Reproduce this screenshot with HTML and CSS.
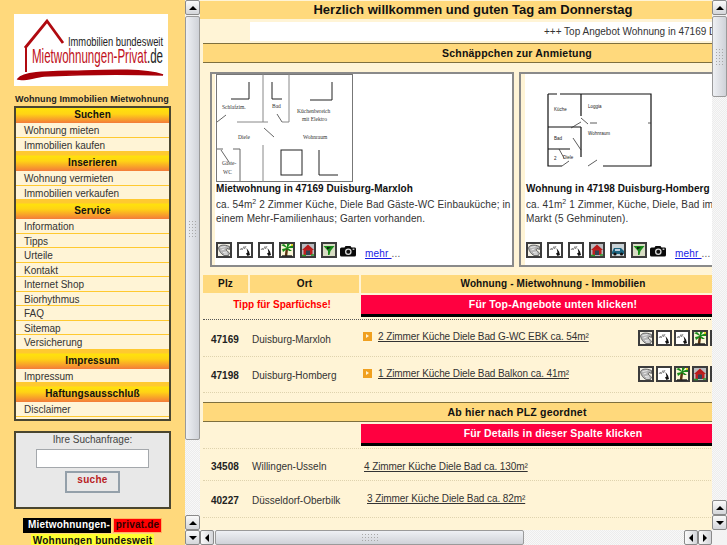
FILE: index.html
```html
<!DOCTYPE html>
<html lang="de">
<head>
<meta charset="utf-8">
<title>Mietwohnungen-Privat.de</title>
<link rel="stylesheet" href="styles.css">
</head>
<body>
<svg class="defs" width="0" height="0" aria-hidden="true">
  <symbol id="i-phone" viewBox="0 0 16 16">
    <rect x="1" y="1" width="14" height="14" fill="#f4f2e8" stroke="#3c3c3c" stroke-width="2"/>
    <path d="M2.5 6 C3 3 8 2 13.5 4.5 L13.5 7.5 L11 6.5 L10 8 L13.5 11 L12.5 13.5 L8 13.5 C5 12 3 9 2.5 6Z" fill="#b4b4b4" stroke="#444" stroke-width=".7"/>
    <path d="M4.5 5.5 L9.5 4.5 M5.5 8 L8.5 7 M7 10.5 L11 10 M8 12 L11.5 12" stroke="#f2f2f2" stroke-width=".9"/>
  </symbol>
  <symbol id="i-sketch" viewBox="0 0 16 16">
    <rect x="1" y="1" width="14" height="14" fill="#fff" stroke="#3c3c3c" stroke-width="2"/>
    <path d="M3 8 L4.5 6 L5 8 L7 4.5 L7.5 7 L9 4" fill="none" stroke="#8a8a8a" stroke-width="1"/>
    <path d="M9.5 6 L12 9.5 L13 13 L10.5 14 L9 11.5 L10.5 10.5Z" fill="#111"/>
  </symbol>
  <symbol id="i-palm" viewBox="0 0 16 16">
    <rect x="1" y="1" width="14" height="14" fill="#fbf6d8" stroke="#3c3c3c" stroke-width="2"/>
    <path d="M8 6 L7 14" stroke="#5a3410" stroke-width="2.4"/>
    <path d="M8 6 L2 3 L5 2 L8 5 L8 1.5 L11 2 L9 5 L14 3 L14 6 L9 6 L13 9 L10 9 L8 7 L4 10 L3 7Z" fill="#178a18"/>
    <circle cx="13" cy="3" r="1" fill="#e8d000"/>
    <path d="M3 14 H13" stroke="#222" stroke-width="1.4"/>
  </symbol>
  <symbol id="i-house" viewBox="0 0 16 16">
    <rect x="1" y="1" width="14" height="14" fill="#b9bcc0" stroke="#3c3c3c" stroke-width="2"/>
    <path d="M2 8 L8 2.5 L14 8Z" fill="#b81c1c"/>
    <rect x="3.5" y="7" width="9" height="6" fill="#c02020"/>
    <rect x="6" y="8.5" width="4" height="4.5" fill="#345"/>
    <path d="M2 13.5 H6 M11 13 H14" stroke="#2a9a2a" stroke-width="1.6"/>
  </symbol>
  <symbol id="i-car" viewBox="0 0 16 16">
    <rect x="1" y="1" width="14" height="14" fill="#c9d2d6" stroke="#3c3c3c" stroke-width="2"/>
    <path d="M2 10 L4 6 L11 6 L14 9 L14 12 L2 12Z" fill="#1c6480"/>
    <rect x="5" y="7" width="5" height="2" fill="#bcd"/>
    <circle cx="5" cy="12" r="1.6" fill="#111"/>
    <circle cx="11.5" cy="12" r="1.6" fill="#111"/>
  </symbol>
  <symbol id="i-tree" viewBox="0 0 16 16">
    <rect x="1" y="1" width="14" height="14" fill="#d8dcc4" stroke="#3c3c3c" stroke-width="2"/>
    <path d="M2.5 4 H13.5 L9.5 9 L8.5 13 L7 13 L7 9Z" fill="#178a18"/>
    <path d="M6 5 L10 5.5 L6 7.5Z" fill="#111"/>
  </symbol>
  <symbol id="i-cam" viewBox="0 0 16 12">
    <path d="M1.5 2.5 H4.5 L5.5 1 H10.5 L11.5 2.5 H15 Q16 2.5 16 4 V10 Q16 11.5 14.5 11.5 H1.5 Q0 11.5 0 10 V4 Q0 2.5 1.5 2.5Z" fill="#0a0a0a"/>
    <circle cx="8.3" cy="6.7" r="3.3" fill="#ddd"/>
    <circle cx="8.3" cy="6.7" r="2" fill="#111"/>
    <rect x="12.6" y="3.6" width="1.8" height="1.2" fill="#eee"/>
  </symbol>
</svg>

<aside class="left-frame">
  <div class="left-pane">
    <div class="logo">
      <svg width="154" height="72" viewBox="0 0 154 72">
        <rect width="154" height="72" fill="#fff"/>
        <path d="M11 34 L33 7 L49 29" fill="none" stroke="#b00a10" stroke-width="2.8"/>
        <path d="M12 33 V58" fill="none" stroke="#b00a10" stroke-width="2"/>
        <path d="M4 65 C10 57 40 58 70 57 C100 56 130 55 149 61 C120 60 70 60 30 62 C20 63 10 67 4 65Z" fill="#a80008" stroke="#a80008" stroke-width="1.6"/>
        <text class="logo-a" x="54" y="31.5" textLength="95" lengthAdjust="spacingAndGlyphs">Immobilien bundesweit</text>
        <text class="logo-b" x="18" y="49" textLength="131" lengthAdjust="spacingAndGlyphs">Mietwohnungen-Privat<tspan class="logo-c">.de</tspan></text>
      </svg>
    </div>
    <p class="tagline">Wohnung Immobilien Mietwohnung</p>
    <nav class="menu">
      <h2 class="menu-head first">Suchen</h2>
      <a class="menu-item" href="#">Wohnung mieten</a>
      <a class="menu-item" href="#">Immobilien kaufen</a>
      <h2 class="menu-head">Inserieren</h2>
      <a class="menu-item" href="#">Wohnung vermieten</a>
      <a class="menu-item" href="#">Immobilien verkaufen</a>
      <h2 class="menu-head">Service</h2>
      <a class="menu-item" href="#">Information</a>
      <a class="menu-item" href="#">Tipps</a>
      <a class="menu-item" href="#">Urteile</a>
      <a class="menu-item" href="#">Kontakt</a>
      <a class="menu-item" href="#">Internet Shop</a>
      <a class="menu-item" href="#">Biorhythmus</a>
      <a class="menu-item" href="#">FAQ</a>
      <a class="menu-item" href="#">Sitemap</a>
      <a class="menu-item" href="#">Versicherung</a>
      <h2 class="menu-head">Impressum</h2>
      <a class="menu-item" href="#">Impressum</a>
      <h2 class="menu-head">Haftungsausschluß</h2>
      <a class="menu-item" href="#">Disclaimer</a>
    </nav>
    <form class="search">
      <label class="search-label" for="q">Ihre Suchanfrage:</label>
      <input class="search-input" id="q" type="text">
      <button class="search-btn" type="button">suche</button>
    </form>
    <div class="brand">
      <span class="brand-a">Mietwohnungen-</span><span class="brand-b">privat.de</span>
    </div>
    <div class="brand-line"><span class="brand-c">Wohnungen bundesweit</span></div>
  </div>
  <div class="vbar">
    <span class="sb-btn up"></span>
    <span class="sb-thumb left-thumb"><span class="grip"></span></span>
    <span class="sb-track"></span>
    <span class="sb-btn up"></span>
    <span class="sb-btn down"></span>
  </div>
</aside>

<main class="right-frame">
  <div class="right-top">
    <div class="content">
      <h1 class="welcome">Herzlich willkommen und guten Tag am Donnerstag</h1>
      <div class="ticker"><span class="ticker-side"></span><span class="ticker-text">+++ Top Angebot Wohnung in 47169 Duisburg-Marxloh</span></div>
      <h2 class="band">Schnäppchen zur Anmietung</h2>
      <div class="cards">
        <article class="card">
          <svg class="plan" width="137" height="108" viewBox="0 0 137 108">
            <rect x=".5" y=".5" width="136" height="107" fill="#fff" stroke="#777"/>
            <g fill="none" stroke="#888" stroke-width="1">
              <path d="M47 0 V48 M47 71 V108 M21 48 H52 M73 0 V48 H66"/>
            </g>
            <g fill="none" stroke="#222" stroke-width="1">
              <path d="M33 8 V25 H15 M56 8 V25 H66 M116 8 V26 H94 M103 76 V101 H122"/>
              <rect x="65" y="76" width="21" height="25"/>
            </g>
            <g fill="none" stroke="#666" stroke-width="1">
              <path d="M61 40 L66 48 M48 54 L58 63 M1 48 L10 41 M5 76 L13 88 M1 75 H7"/>
              <path d="M17 75 H24 V107"/>
            </g>
            <g class="plan-text">
              <text x="6" y="35">Schlafzim.</text>
              <text x="56" y="34">Bad</text>
              <text x="81" y="39">Küchenbereich</text>
              <text x="86" y="47">mit Elektro</text>
              <text x="22" y="65">Diele</text>
              <text x="87" y="65">Wohnraum</text>
              <text x="6" y="91">Gäste-</text>
              <text x="7" y="100">WC</text>
            </g>
          </svg>
          <h3 class="card-title">Mietwohnung in 47169 Duisburg-Marxloh</h3>
          <p class="card-text">ca. 54m<sup>2</sup> 2 Zimmer Küche, Diele Bad Gäste-WC Einbauküche; in<br>einem Mehr-Familienhaus; Garten vorhanden.</p>
          <div class="card-icons">
            <svg class="ic"><use href="#i-phone"/></svg>
            <svg class="ic"><use href="#i-sketch"/></svg>
            <svg class="ic"><use href="#i-sketch"/></svg>
            <svg class="ic"><use href="#i-palm"/></svg>
            <svg class="ic"><use href="#i-house"/></svg>
            <svg class="ic"><use href="#i-tree"/></svg>
            <svg class="cam"><use href="#i-cam"/></svg>
            <span class="more"><a href="#">mehr </a> ...</span>
          </div>
        </article>
        <article class="card">
          <svg class="plan plain" width="137" height="108" viewBox="0 0 137 108">
            <g fill="none" stroke="#111" stroke-width="1.2">
              <path d="M22 20 H31 M34 20 H125 V92 H77 M22 20 V92 H36 M55 20 V42 M22 53 H55 M55 53 V83 M22 75 H44"/>
            </g>
            <g fill="none" stroke="#333" stroke-width=".8">
              <path d="M55 44 L62 50 M55 48 L45 54 M64 49 H71 M47 64 L55 76 M33 75 L38 84 M36 92 L43 87 M62 92 L71 86 M122 49 H125"/>
            </g>
            <g class="plan-text small">
              <text x="28" y="37">Küche</text>
              <text x="62" y="34">Loggia</text>
              <text x="28" y="66">Bad</text>
              <text x="62" y="61">Wohnraum</text>
              <text x="37" y="85">Diele</text>
              <text x="28" y="86">2</text>
            </g>
          </svg>
          <h3 class="card-title">Wohnung in 47198 Duisburg-Homberg</h3>
          <p class="card-text">ca. 41m<sup>2</sup> 1 Zimmer, Küche, Diele, Bad im 1. OG; Nähe<br>Markt (5 Gehminuten).</p>
          <div class="card-icons">
            <svg class="ic"><use href="#i-phone"/></svg>
            <svg class="ic"><use href="#i-sketch"/></svg>
            <svg class="ic"><use href="#i-sketch"/></svg>
            <svg class="ic"><use href="#i-house"/></svg>
            <svg class="ic"><use href="#i-car"/></svg>
            <svg class="ic"><use href="#i-tree"/></svg>
            <svg class="cam"><use href="#i-cam"/></svg>
            <span class="more"><a href="#">mehr </a> ...</span>
          </div>
        </article>
      </div>

      <div class="table">
        <div class="th">Plz</div>
        <div class="th">Ort</div>
        <div class="th wide">Wohnung - Mietwohnung - Immobilien</div>

        <div class="tipp">Tipp für Sparfüchse!</div>
        <div class="cta wide">Für Top-Angebote unten klicken!</div>
        <div class="rule strong"></div>

        <div class="plz">47169</div>
        <div class="ort">Duisburg-Marxloh</div>
        <div class="obj top"><span class="bullet"></span><a href="#">2 Zimmer Küche Diele Bad G-WC EBK ca. 54m²</a></div>
        <div class="row-icons">
          <svg class="ic"><use href="#i-phone"/></svg>
          <svg class="ic"><use href="#i-sketch"/></svg>
          <svg class="ic"><use href="#i-sketch"/></svg>
          <svg class="ic"><use href="#i-palm"/></svg>
          <svg class="ic"><use href="#i-house"/></svg>
        </div>
        <div class="rule"></div>

        <div class="plz">47198</div>
        <div class="ort">Duisburg-Homberg</div>
        <div class="obj top"><span class="bullet"></span><a href="#">1 Zimmer Küche Diele Bad Balkon ca. 41m²</a></div>
        <div class="row-icons">
          <svg class="ic"><use href="#i-phone"/></svg>
          <svg class="ic"><use href="#i-sketch"/></svg>
          <svg class="ic"><use href="#i-palm"/></svg>
          <svg class="ic"><use href="#i-house"/></svg>
          <svg class="ic"><use href="#i-car"/></svg>
        </div>
        <div class="rule"></div>
      </div>

      <h2 class="band second">Ab hier nach PLZ geordnet</h2>

      <div class="table tail">
        <div class="cta wide">Für Details in dieser Spalte klicken</div>
        <div class="rule"></div>

        <div class="plz short">34508</div>
        <div class="ort short">Willingen-Usseln</div>
        <div class="obj a short"><a href="#">4 Zimmer Küche Diele Bad ca. 130m²</a></div>
        <div class="row-icons short"></div>
        <div class="rule"></div>

        <div class="plz">40227</div>
        <div class="ort">Düsseldorf-Oberbilk</div>
        <div class="obj b"><a href="#">3 Zimmer Küche Diele Bad ca. 82m²</a></div>
        <div class="row-icons"></div>
        <div class="rule"></div>
      </div>
    </div>
    <div class="vbar">
      <span class="sb-btn up"></span>
      <span class="sb-thumb right-thumb"><span class="grip"></span></span>
      <span class="sb-track"></span>
      <span class="sb-btn up"></span>
      <span class="sb-btn down"></span>
    </div>
  </div>
  <div class="hbar">
    <span class="sb-btn left"></span>
    <span class="sb-thumb h-thumb"><span class="grip"></span></span>
    <span class="sb-track"></span>
    <span class="sb-btn left"></span>
    <span class="sb-btn right"></span>
    <span class="corner"></span>
  </div>
</main>
</body>
</html>
```

FILE: styles.css
```css
* { box-sizing: border-box; }
html, body { height: 100%; }
body {
  margin: 0;
  display: flex;
  overflow: hidden;
  font-family: "Liberation Sans", Arial, sans-serif;
  font-size: 10px;
  color: #333;
}
.defs { position: absolute; }
a { color: inherit; }
h1, h2, h3, p { margin: 0; }

/* left frame */
.left-frame { width: 200px; height: 545px; display: flex; flex: none; }
.left-pane { width: 185px; height: 545px; overflow: hidden; background: #ffd97c; padding: 14px 0 0 14px; }
.logo { height: 72px; width: 154px; }
.logo svg { display: block; }
.logo-a { font: 13px "Liberation Sans", sans-serif; fill: #222; }
.logo-b { font: 21px "Liberation Sans", sans-serif; fill: #c01020; }
.logo-c { fill: #222; }
.tagline {
  margin: 7px 0 1px 1px;
  height: 12px;
  line-height: 12px;
  font-size: 9px;
  font-weight: bold;
  letter-spacing: .07px;
  color: #222;
  white-space: nowrap;
}
.menu {
  width: 157px;
  height: 315px;
  border: 2px solid #4a4630;
  background: #fff4d6;
  display: flex;
  flex-direction: column;
  overflow: hidden;
}
.menu-head {
  flex: none;
  height: 19px;
  padding-top: 4px;
  line-height: 13px;
  text-align: center;
  font-size: 10px;
  color: #111;
  letter-spacing: .1px;
  background: linear-gradient(#ffc930 0, #ffc930 3px, #ffe20c 4px, #ffd415 9px, #f37b3a 100%);
}
.menu-head.first { height: 15px; padding-top: 0; background: linear-gradient(#ffe20c 0, #ffd415 40%, #f37b3a 100%); }
.menu-item {
  display: block;
  flex: none;
  height: 14.5px;
  padding-left: 8px;
  line-height: 15px;
  font-size: 10px;
  color: #333;
  text-decoration: none;
  border-bottom: 1px solid #ffc930;
  white-space: nowrap;
}
.search {
  margin-top: 10px;
  width: 157px;
  height: 78px;
  border: 2px solid #4a4630;
  background: #e8e8e8;
  display: flex;
  flex-direction: column;
  align-items: center;
}
.search-label { height: 16px; line-height: 13px; font-size: 10px; color: #444; }
.search-input { width: 113px; height: 19px; padding: 0; margin: 0; background: #fff; border: 1px solid #a4a8ac; }
.search-btn {
  margin-top: 3px;
  width: 55px;
  height: 22px;
  padding: 0 0 6px;
  background: #e8e8e8;
  border: 2px solid #94a0aa;
  font: bold 10px "Liberation Sans", sans-serif;
  letter-spacing: .3px;
  color: #b81c24;
}
.brand { margin: 9px 0 0 9px; display: flex; height: 16px; gap: 2px; }
.brand-a { width: 88px; height: 15px; padding-left: 4px; background: #000; color: #fff; font-weight: bold; font-size: 10px; line-height: 14px; letter-spacing: .2px; text-align: center; white-space: nowrap; }
.brand-b { width: 49px; height: 15px; background: #f00; color: #300; font-weight: bold; font-size: 10px; line-height: 14px; letter-spacing: .2px; text-align: center; outline: 1px solid #ffb060; outline-offset: -1px; }
.brand-line { margin-left: 17px; }
.brand-c { display: inline-block; width: 123px; background: #ffff30; color: #111; font-weight: bold; font-size: 10px; line-height: 13px; letter-spacing: .2px; text-align: center; white-space: nowrap; }

/* scrollbars */
.vbar { width: 15px; flex: none; display: flex; flex-direction: column; background: #f3f3f3; }
.hbar { height: 15px; flex: none; display: flex; background: #f3f3f3; }
.sb-btn {
  display: flex;
  align-items: center;
  justify-content: center;
  flex: none;
  width: 15px;
  height: 15px;
  border: 1px solid #8a8a8a;
  border-radius: 2px;
  background: linear-gradient(#fafafa, #d4d6da);
}
.hbar .sb-btn { background: linear-gradient(90deg, #fafafa, #d4d6da); width: 14px; }
.sb-btn::before { content: ""; width: 0; height: 0; }
.sb-btn.up::before { border: 4px solid transparent; border-top: 0; border-bottom: 4px solid #000; }
.sb-btn.down::before { border: 4px solid transparent; border-bottom: 0; border-top: 4px solid #000; }
.sb-btn.left::before { border: 4px solid transparent; border-left: 0; border-right: 4px solid #000; }
.sb-btn.right::before { border: 4px solid transparent; border-right: 0; border-left: 4px solid #000; }
.sb-thumb {
  display: flex;
  align-items: center;
  justify-content: center;
  flex: none;
  border: 1px solid #9a9a9a;
  border-radius: 2px;
  background: linear-gradient(90deg, #eef0f4, #cfd2d8);
}
.left-thumb { height: 424px; margin-top: 1px; }
.right-thumb { height: 81px; margin-top: 1px; }
.h-thumb { width: 309px; margin-left: 1px; background: linear-gradient(#eef0f4, #cfd2d8); }
.sb-track { flex: 1; background: repeating-conic-gradient(#f8f8f8 0 25%, #ececec 0 50%) 0 0 / 2px 2px; }
.grip { width: 9px; height: 17px; background: radial-gradient(circle, #a8a8a8 .6px, transparent .9px) 0 0 / 3px 3px; }
.h-thumb .grip { width: 17px; height: 9px; }
.corner { width: 15px; flex: none; background: #f3f3f3; }

/* right frame */
.right-frame { width: 527px; height: 545px; display: flex; flex-direction: column; flex: none; }
.right-top { height: 530px; display: flex; }
.content { width: 512px; height: 530px; overflow: hidden; background: #fff4d6; padding-top: 1px; }
.welcome {
  width: 546px;
  height: 18px;
  background: #ffd97c;
  text-align: center;
  font-size: 13px;
  line-height: 18px;
  color: #111;
  white-space: nowrap;
}
.ticker { display: flex; margin-top: 3px; height: 19px; }
.ticker-side { width: 50px; flex: none; }
.ticker-text { flex: 1; background: #fff; padding-left: 294px; line-height: 19px; font-size: 10px; white-space: nowrap; overflow: hidden; color: #333; }
.band {
  width: 628px;
  height: 20px;
  margin: 2px 0 0 3px;
  background: #ffd97c;
  border-top: 1px solid #7e6f3e;
  border-bottom: 1px solid #7e6f3e;
  text-align: center;
  font-size: 10.5px;
  line-height: 18px;
  letter-spacing: .2px;
  color: #111;
}
.band.second { margin-top: 8.5px; }
.cards { display: flex; gap: 5px; margin: 9px 0 0 10px; width: 700px; height: 195px; }
.card {
  width: 304px;
  height: 195px;
  flex: none;
  background: #fff;
  border: 2px solid #8a8a8a;
  box-shadow: inset 3px 0 0 #fff4d6;
  padding: 0 0 0 4px;
  overflow: hidden;
}
.card + .card { box-shadow: inset 4px 0 0 #fff4d6; padding-left: 5px; }
.plan { display: block; }
.plan-text text { font: 5.5px "Liberation Serif", serif; fill: #333; }
.plan-text.small text { font: 4.5px "Liberation Sans", sans-serif; fill: #222; }
.card-title { height: 14px; font-size: 10px; line-height: 14px; letter-spacing: .05px; color: #111; white-space: nowrap; }
.card-text { margin-top: 2px; height: 44px; font-size: 10px; line-height: 14px; letter-spacing: .11px; color: #333; white-space: nowrap; }
sup { font-size: 7px; line-height: 0; }
.card-icons { display: flex; align-items: flex-start; gap: 5px; white-space: nowrap; }
.ic { display: block; width: 16px; height: 16px; flex: none; }
.cam { display: block; width: 16px; height: 12px; flex: none; margin: 3px 0 0 -2px; }
.more { margin: 5px 0 0 4px; font-size: 10px; line-height: 13px; letter-spacing: .2px; color: #555; }
.more a { color: #1a1ae6; }

.table {
  margin: 8px 0 0 3px;
  width: 628px;
  display: grid;
  grid-template-columns: 45px 109px 275px 1fr;
  column-gap: 2px;
}
.th {
  height: 18px;
  background: #ffd97c;
  text-align: center;
  font-size: 10px;
  font-weight: bold;
  line-height: 18px;
  letter-spacing: .12px;
  color: #111;
}
.th.wide { grid-column: 3 / 5; width: 384px; }
.tipp {
  grid-column: 1 / 3;
  margin-top: 2px;
  height: 22px;
  text-align: center;
  color: #f00;
  font-size: 10px;
  font-weight: bold;
  line-height: 19px;
  padding-left: 2px;
}
.cta {
  grid-column: 3 / 5;
  margin-top: 2px;
  width: 384px;
  height: 22px;
  background: #ff0040;
  border-bottom: 3px solid #000;
  color: #fff;
  text-align: center;
  font-size: 10.5px;
  font-weight: bold;
  line-height: 18px;
  letter-spacing: .15px;
}
.tail { margin-top: 2px; }
.tail .cta { margin-top: 0; }
.rule { grid-column: 1 / -1; height: 1px; border-top: 1px dotted #dfd3ae; }
.rule.strong { margin-top: 2px; border-top: 1px dotted #555; }
.tail .cta + .rule { margin-top: 2px; }
.plz, .ort, .obj, .row-icons { display: flex; align-items: center; height: 35.5px; font-size: 10px; }
.tail .plz, .tail .ort, .tail .obj, .tail .row-icons { height: 36px; }
.tail .plz.short, .tail .ort.short, .tail .obj.short, .tail .row-icons.short { height: 31px; padding-top: 5px; }
.plz { padding: 3px 0 0 8px; font-weight: bold; color: #222; }
.ort { padding: 3px 0 0 2px; color: #333; white-space: nowrap; }
.obj { white-space: nowrap; letter-spacing: -.09px; color: #333; }
.obj.top { padding: 0 0 2px 2px; }
.obj.a { padding-left: 3px; }
.obj.b { padding: 0 0 0 6px; }
.bullet { display: inline-block; width: 9px; height: 9px; margin-right: 6px; background: #f0a020; position: relative; flex: none; }
.bullet::after { content: ""; position: absolute; left: 3px; top: 2px; border: 2.5px solid transparent; border-right: 0; border-left: 3px solid #fff4d6; }
.row-icons { gap: 2px; }
```
